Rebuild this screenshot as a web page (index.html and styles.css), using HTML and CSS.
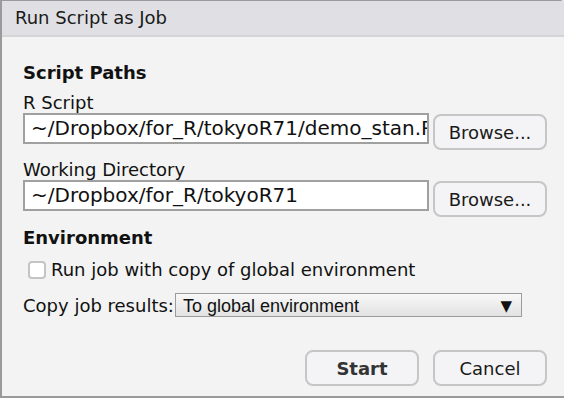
FILE: index.html
```html
<!DOCTYPE html>
<html lang="en">
<head>
    <meta charset="UTF-8">
    <title>Run Script as Job</title>
    <link rel="stylesheet" href="styles.css">
</head>
<body>
    <div class="dialog">
        <div class="dialog-title">Run Script as Job</div>

        <div class="dialog-body">
            <h2 class="section-title">Script Paths</h2>

            <div class="field">
                <label class="field-label">R Script</label>
                <div class="field-row">
                    <div class="path-box">~/Dropbox/for_R/tokyoR71/demo_stan.R</div>
                    <button class="btn">Browse...</button>
                </div>
            </div>

            <div class="field">
                <label class="field-label">Working Directory</label>
                <div class="field-row">
                    <div class="path-box">~/Dropbox/for_R/tokyoR71</div>
                    <button class="btn">Browse...</button>
                </div>
            </div>

            <h2 class="section-title env">Environment</h2>

            <label class="check-row">
                <span class="checkbox"></span>
                Run job with copy of global environment
            </label>

            <div class="select-row">
                <span>Copy job results:</span>
                <div class="select">
                    <span>To global environment</span>
                    <span class="arrow">&#9660;</span>
                </div>
            </div>
        </div>

        <div class="dialog-footer">
            <button class="btn primary">Start</button>
            <button class="btn">Cancel</button>
        </div>
    </div>
</body>
</html>
```

FILE: styles.css
```css
* {
    margin: 0;
    padding: 0;
    box-sizing: border-box;
}

body {
    font-family: 'DejaVu Sans', sans-serif;
    background-color: #f2f3f2;
    color: #111;
    width: 564px;
    height: 398px;
    overflow: hidden;
}

.dialog {
    width: 564px;
    height: 398px;
    border-left: 2px solid #9a9a9a;
    border-top: 1px solid #9a9a9a;
    border-bottom: 2px solid #9a9a9a;
    border-top-right-radius: 4px;
    display: flex;
    flex-direction: column;
    background-color: #f2f3f2;
}

.dialog-title {
    height: 36px;
    background-color: #e0e0e4;
    border-bottom: 2px solid #d3d3d8;
    padding: 6px 0 0 13px;
    font-size: 18px;
    line-height: 21px;
    color: #1a1a1a;
}

.dialog-body {
    padding: 25px 16px 0 21px;
    flex: 1;
}

.section-title {
    font-size: 18px;
    font-weight: bold;
    line-height: 21px;
}

.section-title.env {
    margin-top: 10px;
}

.field {
    margin-top: 9px;
}

.field-label {
    display: block;
    font-size: 18px;
    line-height: 21px;
}

.field-row {
    display: flex;
    gap: 4px;
    align-items: flex-start;
}

/* path shows clipped at the box edge, as in the dialog */
.path-box {
    width: 406px;
    height: 31px;
    background-color: #fff;
    border: 2px solid #a0a0a0;
    font-size: 20px;
    line-height: 26px;
    padding-left: 6px;
    white-space: nowrap;
    overflow: hidden;
}

.btn {
    width: 114px;
    height: 36px;
    margin-top: 1px;
    font-family: 'DejaVu Sans', sans-serif;
    font-size: 18px;
    color: #1a1a1a;
    background-color: #f4f4f6;
    border: 2px solid #c6c6c6;
    border-radius: 8px;
}

.btn.primary {
    font-weight: bold;
    color: #333;
}

.check-row {
    display: flex;
    align-items: center;
    gap: 5px;
    margin-top: 11px;
    margin-left: 5px;
    font-size: 18px;
    line-height: 21px;
}

.checkbox {
    width: 18px;
    height: 18px;
    background-color: #fff;
    border: 2px solid #c4c4c4;
    border-radius: 4px;
}

.select-row {
    display: flex;
    align-items: center;
    margin-top: 13px;
    font-size: 18px;
    line-height: 21px;
}

.select {
    width: 347px;
    height: 24px;
    margin-left: 1px;
    display: flex;
    justify-content: space-between;
    align-items: center;
    padding: 2px 9px 0 7px;
    border: 1px solid #9c9c9c;
    background: linear-gradient(#f8f8f8, #e2e2e2);
    font-family: 'Liberation Sans', sans-serif;
    font-size: 18px;
}

.select .arrow {
    font-family: 'DejaVu Sans', sans-serif;
    font-size: 15px;
}

.dialog-footer {
    display: flex;
    justify-content: flex-end;
    gap: 14px;
    padding: 0 17px 10px 0;
}

.dialog-footer .btn {
    margin-top: 0;
}
```
